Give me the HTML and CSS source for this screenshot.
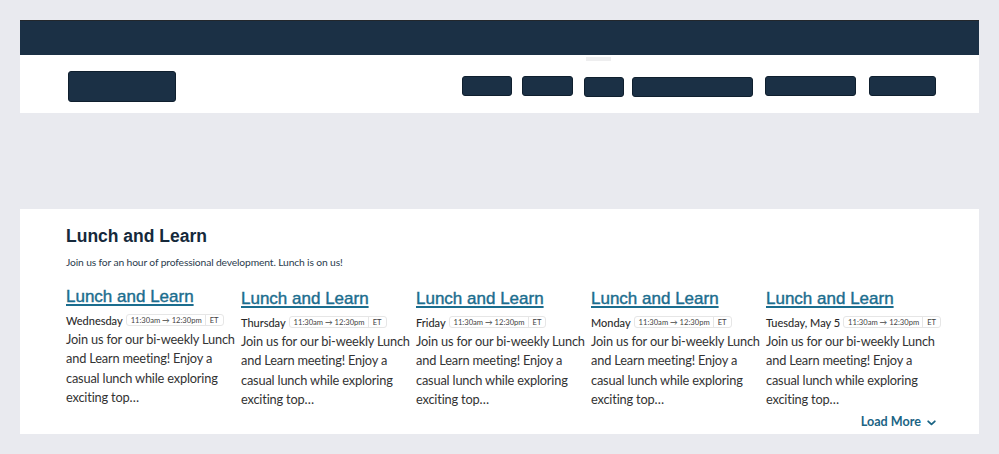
FILE: index.html
```html
<!DOCTYPE html>
<html lang="en">
<head>
<meta charset="utf-8">
<title>Lunch and Learn</title>
<link rel="stylesheet" href="styles.css">
</head>
<body>
<div class="page">
  <div class="topbar"></div>
  <header class="header">
    <div class="header-tick"></div>
    <div class="logo"></div>
    <nav class="nav">
      <span class="nav-item n1"></span>
      <span class="nav-item n2"></span>
      <span class="nav-item n3"></span>
      <span class="nav-item n4"></span>
      <span class="nav-item n5"></span>
      <span class="nav-item n6"></span>
    </nav>
  </header>

  <section class="events">
    <h2 class="events-title">Lunch and Learn</h2>
    <p class="events-desc">Join us for an hour of professional development. Lunch is on us!</p>
    <div class="cards">
      <article class="card first">
        <a class="card-title" href="#">Lunch and Learn</a>
        <div class="card-meta"><span class="day">Wednesday</span><span class="badge"><span class="time">11:30am → 12:30pm</span><span class="tz">ET</span></span></div>
        <p class="card-text">Join us for our bi-weekly Lunch and Learn meeting! Enjoy a casual lunch while exploring exciting top…</p>
      </article>
      <article class="card">
        <a class="card-title" href="#">Lunch and Learn</a>
        <div class="card-meta"><span class="day">Thursday</span><span class="badge"><span class="time">11:30am → 12:30pm</span><span class="tz">ET</span></span></div>
        <p class="card-text">Join us for our bi-weekly Lunch and Learn meeting! Enjoy a casual lunch while exploring exciting top…</p>
      </article>
      <article class="card">
        <a class="card-title" href="#">Lunch and Learn</a>
        <div class="card-meta"><span class="day">Friday</span><span class="badge"><span class="time">11:30am → 12:30pm</span><span class="tz">ET</span></span></div>
        <p class="card-text">Join us for our bi-weekly Lunch and Learn meeting! Enjoy a casual lunch while exploring exciting top…</p>
      </article>
      <article class="card">
        <a class="card-title" href="#">Lunch and Learn</a>
        <div class="card-meta"><span class="day">Monday</span><span class="badge"><span class="time">11:30am → 12:30pm</span><span class="tz">ET</span></span></div>
        <p class="card-text">Join us for our bi-weekly Lunch and Learn meeting! Enjoy a casual lunch while exploring exciting top…</p>
      </article>
      <article class="card">
        <a class="card-title" href="#">Lunch and Learn</a>
        <div class="card-meta"><span class="day">Tuesday, May 5</span><span class="badge"><span class="time">11:30am → 12:30pm</span><span class="tz">ET</span></span></div>
        <p class="card-text">Join us for our bi-weekly Lunch and Learn meeting! Enjoy a casual lunch while exploring exciting top…</p>
      </article>
    </div>
    <div class="more-row">
      <a class="load-more" href="#">Load More
        <svg class="chev" width="9" height="6" viewBox="0 0 9 6" aria-hidden="true"><path d="M1.2 1.3 L4.5 4.4 L7.8 1.3" fill="none" stroke="currentColor" stroke-width="1.8" stroke-linecap="round" stroke-linejoin="round"/></svg>
      </a>
    </div>
  </section>
</div>
</body>
</html>
```

FILE: styles.css
```css
* { box-sizing: border-box; }

html, body {
  margin: 0;
  padding: 0;
  background: #e9eaef;
}

body {
  font-family: Lato, "Noto Sans", sans-serif;
  color: #333;
}

.page {
  width: 959px;
  margin: 0 20px;
  padding-top: 20px;
}

.topbar {
  height: 35px;
  background: #1b3045;
  border-top: 1px solid #23272c;
}

.header {
  position: relative;
  height: 58px;
  background: #fff;
  display: flex;
  align-items: flex-start;
  padding: 16px 43px 0 48px;
}

.header-tick {
  position: absolute;
  left: 566px;
  top: 2px;
  width: 25px;
  height: 4px;
  background: #eeeeef;
}

.logo {
  width: 108px;
  height: 31px;
  background: #1b3045;
  border: 1px solid #0f1f2e;
  border-radius: 3px;
}

.nav {
  margin-left: auto;
  display: flex;
  align-items: flex-start;
  padding-top: 5px;
}

.nav-item {
  display: block;
  height: 20px;
  background: #1b3045;
  border: 1px solid #0f1f2e;
  border-radius: 3px;
}

.n1 { width: 50px; }
.n2 { width: 51px; margin-left: 10px; }
.n3 { width: 40px; margin-left: 11px; margin-top: 1px; }
.n4 { width: 121px; margin-left: 8px; margin-top: 1px; }
.n5 { width: 91px; margin-left: 12px; }
.n6 { width: 67px; margin-left: 13px; }

.events {
  margin-top: 96px;
  height: 225px;
  background: #fff;
  padding: 16px 43px 0 46px;
}

.events-title {
  margin: 0;
  font-family: "Liberation Sans", Arial, sans-serif;
  font-weight: 700;
  font-size: 17.5px;
  line-height: 22px;
  color: #15293b;
}

.events-desc {
  margin: 8px 0 0;
  font-size: 10.3px;
  letter-spacing: -0.14px;
  line-height: 14px;
  color: #2b3c4e;
}

.cards {
  display: grid;
  grid-template-columns: repeat(5, 172px);
  column-gap: 3px;
  margin-top: 17px;
}

.card {
  padding-top: 2px;
}

.card.first {
  padding-top: 0;
}

.card-title {
  display: inline-block;
  font-family: "Liberation Sans", Arial, sans-serif;
  font-size: 17px;
  line-height: 20px;
  color: #1b6d8e;
  -webkit-text-stroke: 0.4px #1b6d8e;
  text-decoration: underline;
  text-underline-offset: 2px;
  text-decoration-thickness: 2px;
}

.card-meta {
  display: flex;
  align-items: center;
  margin-top: 6px;
  height: 14px;
  white-space: nowrap;
}

.day {
  font-size: 11px;
  color: #262626;
  -webkit-text-stroke: 0.08px #262626;
  margin-right: 3px;
}

.badge {
  display: inline-flex;
  align-items: center;
  flex-shrink: 0;
  border: 1px solid #e6e6e6;
  border-radius: 3px;
  height: 12px;
  font-size: 7.6px;
  line-height: 10px;
  color: #444;
}

.time {
  padding: 0 3px 0 4px;
}

.tz {
  padding: 0 4px;
  border-left: 1px solid #e6e6e6;
}

.card-text {
  margin: 3px 0 0;
  font-size: 12.8px;
  letter-spacing: -0.18px;
  line-height: 19.3px;
  color: #333;
}

.more-row {
  display: flex;
  justify-content: flex-end;
  margin-top: 5px;
}

.load-more {
  display: inline-flex;
  align-items: center;
  gap: 6px;
  font-size: 12.6px;
  font-weight: 700;
  color: #1b6484;
  text-decoration: none;
}

.chev {
  display: block;
  margin-top: 3px;
}
```
